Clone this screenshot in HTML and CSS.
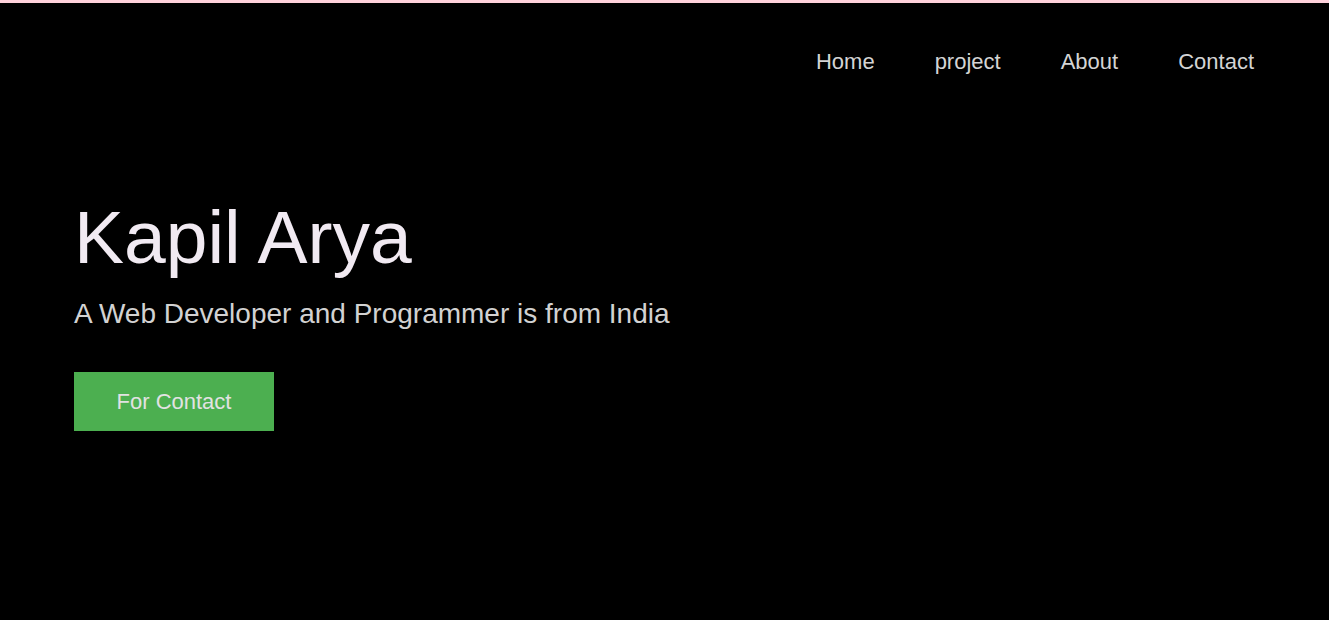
FILE: index.html
```html
<!DOCTYPE html>
<html lang="en">
<head>
<meta charset="utf-8">
<title>Kapil Arya</title>
<link rel="stylesheet" href="styles.css">
</head>
<body>
<div class="page">
  <header class="topbar">
    <nav class="nav">
      <a class="nav-link" href="#">Home</a>
      <a class="nav-link" href="#">project</a>
      <a class="nav-link" href="#">About</a>
      <a class="nav-link" href="#">Contact</a>
    </nav>
  </header>
  <section class="hero">
    <h1 class="hero-title">Kapil Arya</h1>
    <p class="hero-sub">A Web Developer and Programmer is from India</p>
    <a class="hero-btn" href="#">For Contact</a>
  </section>
</div>
</body>
</html>
```
FILE: styles.css
```css
html, body {
  margin: 0;
  padding: 0;
}
body {
  background: #ffd2dc;
  padding-top: 3px;
  font-family: "Liberation Sans", Arial, sans-serif;
  height: 620px;
  box-sizing: border-box;
  overflow: hidden;
}
.page {
  background: #000;
  height: 617px;
}
.topbar {
  display: flex;
  justify-content: flex-end;
  padding: 46px 75px 0 0;
}
.nav {
  display: flex;
  gap: 60px;
}
.nav-link {
  color: #d4d4d4;
  text-decoration: none;
  font-size: 22px;
  line-height: 25px;
}
.hero {
  padding: 120px 0 0 74px;
}
.hero-title {
  margin: 0;
  font-weight: normal;
  font-size: 75px;
  line-height: 86px;
  color: #f1eaf2;
}
.hero-sub {
  margin: 18px 0 0;
  font-size: 28px;
  line-height: 32px;
  color: #d2d2d2;
}
.hero-btn {
  display: inline-flex;
  align-items: center;
  justify-content: center;
  margin-top: 42px;
  width: 200px;
  height: 59px;
  background: #4caf50;
  color: #e2e2e2;
  text-decoration: none;
  font-size: 22px;
}
```
